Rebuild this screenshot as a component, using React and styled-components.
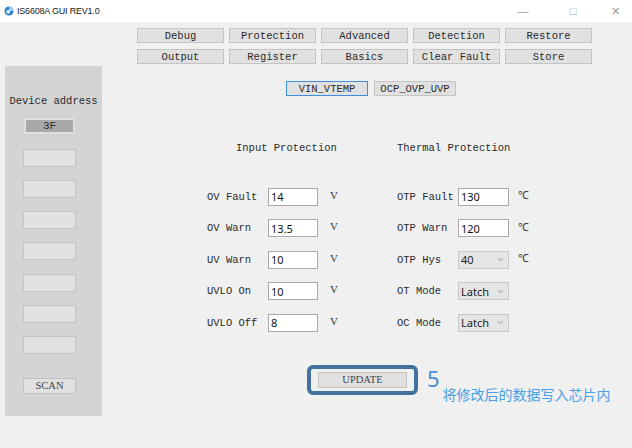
import React from "react";
import styled, { createGlobalStyle } from "styled-components";

const GlobalStyle = createGlobalStyle`
  html, body {
    margin: 0;
    padding: 0;
    background: #f0f0f0;
  }
  * { box-sizing: border-box; }
`;

const mono = `"Liberation Mono", "DejaVu Sans Mono", monospace`;

const Window = styled.div`
  width: 632px;
  height: 448px;
  background: #f0f0f0;
  display: flex;
  flex-direction: column;
  overflow: hidden;
`;

const TitleBar = styled.div`
  height: 22px;
  background: #ffffff;
  display: flex;
  align-items: center;
  padding-left: 4px;
  font-family: "Liberation Sans", Arial, sans-serif;
  font-size: 9px;
  color: #222;
`;

const TitleText = styled.span`
  margin-left: 3px;
  letter-spacing: -0.2px;
`;

const Controls = styled.div`
  margin-left: auto;
  display: flex;
  align-items: center;
  color: #9a9a9a;
`;

const Ctrl = styled.span`
  width: ${(p) => p.w}px;
  display: flex;
  justify-content: center;
  font-size: 11px;
`;

const Body = styled.div`
  flex: 1;
  display: flex;
`;

const Sidebar = styled.div`
  margin: 44px 0 0 5px;
  width: 97px;
  height: 350px;
  background: #d4d4d4;
  display: flex;
  flex-direction: column;
  padding: 29px 0 0 18px;
  gap: 13.3px;
`;

const SideTitle = styled.div`
  margin-left: -15px;
  width: 91px;
  text-align: center;
  font-family: ${mono};
  font-size: 10.5px;
  line-height: 12px;
  color: #2a2a2a;
  margin-bottom: -3px;
`;

const AddrBox = styled.div`
  width: 53px;
  height: 18px;
  border: 1px solid ${(p) => (p.active ? "#cfcfcf" : "#c4c4c4")};
  background: ${(p) => (p.active ? "#a9a9a9" : "#e1e1e1")};
  box-shadow: ${(p) => (p.active ? "inset 0 0 0 2px #e0e0e0" : "none")};
  display: flex;
  align-items: center;
  justify-content: center;
  font-family: ${mono};
  font-size: 11px;
  color: #2a2a2a;
`;

const ScanButton = styled.div`
  margin-top: 10px;
  width: 53px;
  height: 16px;
  border: 1px solid #c0c0c0;
  background: #e1e1e1;
  display: flex;
  align-items: center;
  justify-content: center;
  font-family: "Liberation Serif", "Times New Roman", serif;
  font-size: 10.5px;
  color: #444;
`;

const Main = styled.div`
  margin-left: 35px;
  display: flex;
  flex-direction: column;
`;

const TabGrid = styled.div`
  margin-top: 6px;
  display: grid;
  grid-template-columns: repeat(5, 87px);
  column-gap: 5px;
  row-gap: 6px;
`;

const TabButton = styled.div`
  height: 15px;
  border: 1px solid #c4c4c4;
  background: #e1e1e1;
  display: flex;
  align-items: center;
  justify-content: center;
  font-family: ${mono};
  font-size: 10.5px;
  color: #2a2a2a;
`;

const SubTabs = styled.div`
  margin: 17px 0 0 149px;
  display: flex;
  gap: 6px;
`;

const SubTab = styled.div`
  width: 82px;
  height: 15px;
  border: 1px solid ${(p) => (p.active ? "#3c8fe0" : "#c4c4c4")};
  background: #e1e1e1;
  display: flex;
  align-items: center;
  justify-content: center;
  font-family: ${mono};
  font-size: 10.5px;
  color: #2a2a2a;
`;

const FormGrid = styled.div`
  margin: 46px 0 0 70px;
  display: grid;
  grid-template-columns: 190px 140px;
  row-gap: 13.5px;
`;

const Heading = styled.div`
  padding-left: ${(p) => p.indent || 0}px;
  font-family: ${mono};
  font-size: 10.5px;
  line-height: 12px;
  color: #2a2a2a;
  margin-bottom: 20px;
`;

const Field = styled.div`
  display: flex;
  align-items: center;
  height: 18px;
`;

const Label = styled.span`
  width: 61px;
  font-family: ${mono};
  font-size: 10.5px;
  color: #2a2a2a;
`;

const Input = styled.div`
  width: ${(p) => p.w}px;
  height: 18px;
  border: 1px solid #a8a8a8;
  background: #fff;
  padding-left: 2px;
  display: flex;
  align-items: center;
  font-family: "Noto Sans", "Liberation Sans", sans-serif;
  font-size: 11px;
  color: #111;
`;

const Select = styled.div`
  width: ${(p) => p.w}px;
  height: 18px;
  border: 1px solid #c8c8c8;
  background: #e5e5e5;
  padding: 0 4px 0 2px;
  display: flex;
  align-items: center;
  justify-content: space-between;
  font-family: "Noto Sans", "Liberation Sans", sans-serif;
  font-size: 11px;
  color: #222;
`;

const Unit = styled.span`
  margin-left: ${(p) => p.gap}px;
  margin-top: -4px;
  font-family: "Liberation Serif", serif;
  font-size: 11px;
  color: #333;
`;

const UpdateRow = styled.div`
  margin: 33px 0 0 170px;
  display: flex;
  align-items: flex-start;
`;

const Highlight = styled.div`
  width: 111px;
  height: 30px;
  border: 4px solid #41719c;
  border-radius: 6px;
  display: flex;
  align-items: center;
  justify-content: center;
`;

const UpdateButton = styled.div`
  width: 89px;
  height: 16px;
  border: 1px solid #c4c4c4;
  background: #e1e1e1;
  display: flex;
  align-items: center;
  justify-content: center;
  font-family: "Liberation Serif", "Times New Roman", serif;
  font-size: 10.5px;
  color: #444;
`;

const Step = styled.span`
  margin-left: 9px;
  font-family: "Noto Sans", "Liberation Sans", sans-serif;
  font-size: 22px;
  line-height: 26px;
  color: #4a8fd4;
`;

const Note = styled.span`
  margin: 20px 0 0 3px;
  font-family: "Noto Sans CJK SC", sans-serif;
  font-size: 14px;
  line-height: 18px;
  color: #4a9ee6;
`;

const Chevron = () => (
  <svg width="7" height="5" viewBox="0 0 7 5">
    <path d="M1 1.2 L3.5 3.6 L6 1.2" fill="none" stroke="#8a8a8a" strokeWidth="0.9" />
  </svg>
);

const AppIcon = () => (
  <svg width="10" height="10" viewBox="0 0 10 10">
    <circle cx="5" cy="5" r="4.5" fill="#2f7fc8" />
    <path d="M5 0.5 A4.5 4.5 0 0 1 9.5 5 L5 5 Z" fill="#9fd0f0" />
    <circle cx="4.2" cy="5.8" r="2" fill="#cfe8f8" />
  </svg>
);

const tabs = [
  "Debug", "Protection", "Advanced", "Detection", "Restore",
  "Output", "Register", "Basics", "Clear Fault", "Store",
];

const leftRows = [
  ["OV Fault", "14"],
  ["OV Warn", "13.5"],
  ["UV Warn", "10"],
  ["UVLO On", "10"],
  ["UVLO Off", "8"],
];

const rightRows = [
  ["OTP Fault", "130", "input", "℃"],
  ["OTP Warn", "120", "input", "℃"],
  ["OTP Hys", "40", "select", "℃"],
  ["OT Mode", "Latch", "select"],
  ["OC Mode", "Latch", "select"],
];

export default function App() {
  return (
    <Window>
      <GlobalStyle />
      <TitleBar>
        <AppIcon />
        <TitleText>IS6608A GUI REV1.0</TitleText>
        <Controls>
          <Ctrl w={50}>—</Ctrl>
          <Ctrl w={50}>□</Ctrl>
          <Ctrl w={34}>✕</Ctrl>
        </Controls>
      </TitleBar>
      <Body>
        <Sidebar>
          <SideTitle>Device address</SideTitle>
          <AddrBox active>3F</AddrBox>
          {Array.from({ length: 7 }).map((_, i) => (
            <AddrBox key={i} />
          ))}
          <ScanButton>SCAN</ScanButton>
        </Sidebar>
        <Main>
          <TabGrid>
            {tabs.map((t) => (
              <TabButton key={t}>{t}</TabButton>
            ))}
          </TabGrid>
          <SubTabs>
            <SubTab active>VIN_VTEMP</SubTab>
            <SubTab>OCP_OVP_UVP</SubTab>
          </SubTabs>
          <FormGrid>
            <Heading indent={29}>Input Protection</Heading>
            <Heading>Thermal Protection</Heading>
            {leftRows.map(([label, value], i) => {
              const [rl, rv, kind, unit] = rightRows[i];
              return (
                <React.Fragment key={label}>
                  <Field>
                    <Label>{label}</Label>
                    <Input w={50}>{value}</Input>
                    <Unit gap={12}>V</Unit>
                  </Field>
                  <Field>
                    <Label>{rl}</Label>
                    {kind === "input" ? (
                      <Input w={51}>{rv}</Input>
                    ) : (
                      <Select w={51}>
                        {rv}
                        <Chevron />
                      </Select>
                    )}
                    {unit && <Unit gap={9}>{unit}</Unit>}
                  </Field>
                </React.Fragment>
              );
            })}
          </FormGrid>
          <UpdateRow>
            <Highlight>
              <UpdateButton>UPDATE</UpdateButton>
            </Highlight>
            <Step>5</Step>
            <Note>将修改后的数据写入芯片内</Note>
          </UpdateRow>
        </Main>
      </Body>
    </Window>
  );
}
